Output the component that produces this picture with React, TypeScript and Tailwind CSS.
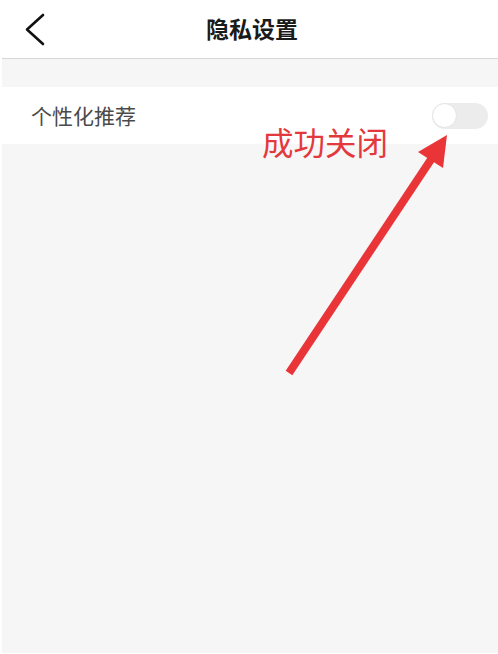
const font = { fontFamily: '"Noto Sans CJK SC", "Noto Sans", sans-serif' };

export default function App() {
  return (
    <div className="relative w-[498px] h-[654px] bg-white overflow-hidden" style={font}>
      {/* header */}
      <div className="relative h-[59px] border-b border-[#d6d6d6] ml-[2px]">
        <svg className="absolute left-[20px] top-[12px]" width="28" height="36" viewBox="0 0 28 36">
          <polyline points="21,3 5,17.5 21,32" fill="none" stroke="#111" strokeWidth="2.6" strokeLinecap="round" strokeLinejoin="round" />
        </svg>
        <div className="flex h-full items-center justify-center pb-[2px] pl-[4px] text-[23px] font-bold text-[#1a1a1a]">
          隐私设置
        </div>
      </div>

      <div className="ml-[2px] h-[594px] bg-[#f6f6f6] pt-[28px]">
        <div className="flex h-[57px] items-center justify-between bg-white pl-[29px] pr-[10px]">
          <span className="text-[21px] text-[#4a4a4a]">个性化推荐</span>
          <div className="flex h-[26px] w-[56px] items-center rounded-full bg-[#ececec]">
            <div className="h-[25px] w-[25px] rounded-full border border-[#e4e4e4] bg-white" />
          </div>
        </div>
      </div>

      {/* annotation */}
      <div className="absolute left-[262px] top-[121px] text-[31.5px] leading-[40px] text-[#e4393c]">成功关闭</div>
      <svg className="absolute left-0 top-0" width="498" height="654" viewBox="0 0 498 654">
        <line x1="289" y1="373" x2="432" y2="158" stroke="#e93538" strokeWidth="8" />
        <polygon points="447,135 443,168 418,152" fill="#e93538" />
      </svg>
    </div>
  );
}
